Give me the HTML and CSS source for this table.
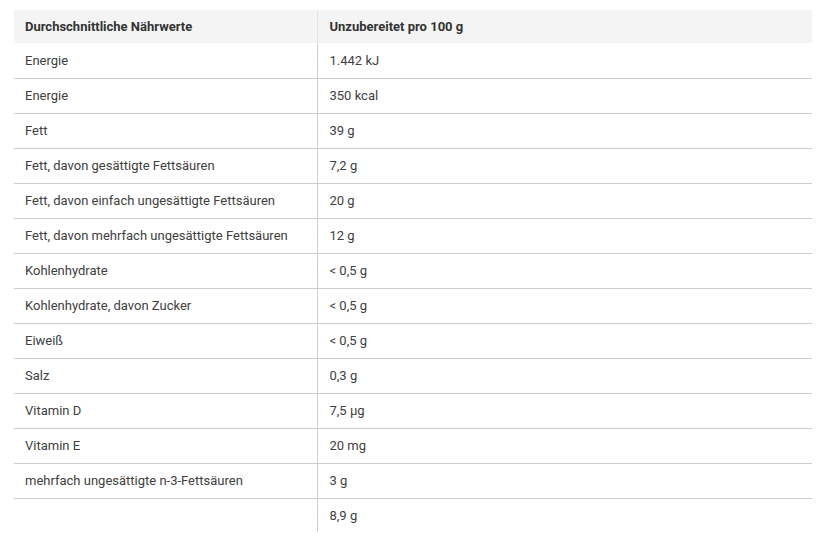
FILE: index.html
```html
<!DOCTYPE html>
<html lang="de">
<head>
<meta charset="utf-8">
<title>Nährwerte</title>
<link rel="stylesheet" href="styles.css">
</head>
<body>
<table class="nutri">
  <thead>
    <tr><th class="c1">Durchschnittliche Nährwerte</th><th class="c2">Unzubereitet pro 100 g</th></tr>
  </thead>
  <tbody>
    <tr><td class="c1">Energie</td><td class="c2">1.442 kJ</td></tr>
    <tr><td class="c1">Energie</td><td class="c2">350 kcal</td></tr>
    <tr><td class="c1">Fett</td><td class="c2">39 g</td></tr>
    <tr><td class="c1">Fett, davon gesättigte Fettsäuren</td><td class="c2">7,2 g</td></tr>
    <tr><td class="c1">Fett, davon einfach ungesättigte Fettsäuren</td><td class="c2">20 g</td></tr>
    <tr><td class="c1">Fett, davon mehrfach ungesättigte Fettsäuren</td><td class="c2">12 g</td></tr>
    <tr><td class="c1">Kohlenhydrate</td><td class="c2">&lt; 0,5 g</td></tr>
    <tr><td class="c1">Kohlenhydrate, davon Zucker</td><td class="c2">&lt; 0,5 g</td></tr>
    <tr><td class="c1">Eiweiß</td><td class="c2">&lt; 0,5 g</td></tr>
    <tr><td class="c1">Salz</td><td class="c2">0,3 g</td></tr>
    <tr><td class="c1">Vitamin D</td><td class="c2">7,5 µg</td></tr>
    <tr><td class="c1">Vitamin E</td><td class="c2">20 mg</td></tr>
    <tr><td class="c1">mehrfach ungesättigte n-3-Fettsäuren</td><td class="c2">3 g</td></tr>
    <tr class="last"><td class="c1"></td><td class="c2">8,9 g</td></tr>
  </tbody>
</table>
</body>
</html>
```
FILE: styles.css
```css
html, body {
  margin: 0;
  padding: 0;
  background: #ffffff;
}
body {
  padding: 10px 13px 0 14px;
  font-family: Roboto, "Liberation Sans", sans-serif;
  font-size: 13px;
  color: #404040;
}
.nutri {
  width: 798px;
  border-collapse: collapse;
  table-layout: fixed;
}
.nutri th {
  background: #f4f4f4;
  color: #333333;
  font-weight: bold;
  text-align: left;
  height: 33px;
  padding: 0 0 0 11px;
  box-sizing: border-box;
}
.nutri td {
  height: 35px;
  padding: 0 0 0 11px;
  box-sizing: border-box;
  border-bottom: 1px solid #cccccc;
}
.nutri .c1 {
  width: 303px;
  border-right: 1px solid #cccccc;
}
.nutri th.c1 { border-right: 1px solid #e2e2e2; }
.nutri .c2 {
  padding-left: 12px;
}
.nutri tr.last td {
  border-bottom: none;
  height: 34px;
}
```
